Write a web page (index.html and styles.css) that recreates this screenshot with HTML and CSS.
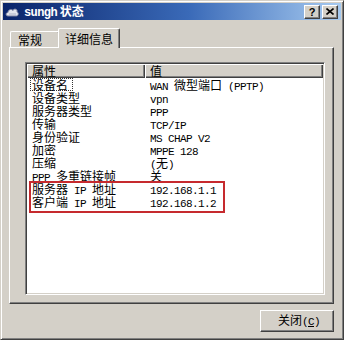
FILE: index.html
```html
<!DOCTYPE html>
<html>
<head>
<meta charset="utf-8">
<link rel="stylesheet" href="styles.css">
</head>
<body>
<div class="dlg">
  <div class="title">
    <svg class="ticon" width="14" height="11" viewBox="0 0 14 11">
      <path d="M3 10 C0.5 10 0.5 6.5 3 6.5 C3 3.5 6.5 2.5 8 4.5 C9 2 13 3 12 6 C14 6.5 13.5 10 11.5 10 Z" fill="#e4e6ee" stroke="#7a80a0" stroke-width="1"/>
      <path d="M4 8 L11 8" stroke="#b0b4c8" stroke-width="1"/>
    </svg>
    <span class="ttext"><span class="ten">sungh</span> 状态</span>
    <div class="tbtns">
      <span class="tb help">?</span>
      <span class="tb"><svg width="8" height="7" viewBox="0 0 8 7"><path d="M0.5 0.5 L7.5 6.5 M7.5 0.5 L0.5 6.5" stroke="#000" stroke-width="1.6"/></svg></span>
    </div>
  </div>
  <div class="body">
    <div class="tabs">
      <div class="tab">常规</div>
      <div class="tab sel">详细信息</div>
    </div>
    <div class="panel">
      <div class="list">
        <div class="hdr">
          <div class="hc c1">属性</div>
          <div class="hc c2">值</div>
        </div>
        <div class="rows">
          <div class="row"><span class="k"><span class="focus">设备名</span></span><span class="v"><span class="en">WAN </span>微型端口<span class="en"> (PPTP)</span></span></div>
          <div class="row"><span class="k">设备类型</span><span class="v"><span class="en">vpn</span></span></div>
          <div class="row"><span class="k">服务器类型</span><span class="v"><span class="en">PPP</span></span></div>
          <div class="row"><span class="k">传输</span><span class="v"><span class="en">TCP/IP</span></span></div>
          <div class="row"><span class="k">身份验证</span><span class="v"><span class="en">MS CHAP V2</span></span></div>
          <div class="row"><span class="k">加密</span><span class="v"><span class="en">MPPE 128</span></span></div>
          <div class="row"><span class="k">压缩</span><span class="v"><span class="en">(</span>无<span class="en">)</span></span></div>
          <div class="row"><span class="k"><span class="en">PPP </span>多重链接帧</span><span class="v">关</span></div>
          <div class="row"><span class="k">服务器<span class="en"> IP </span>地址</span><span class="v"><span class="en">192.168.1.1</span></span></div>
          <div class="row"><span class="k">客户端<span class="en"> IP </span>地址</span><span class="v"><span class="en">192.168.1.2</span></span></div>
          <div class="mark"></div>
        </div>
      </div>
    </div>
    <div class="foot">
      <button class="btn">关闭<span class="en">(<u>C</u>)</span></button>
    </div>
  </div>
</div>
</body>
</html>
```

FILE: styles.css
```css
html, body {
  margin: 0;
  padding: 0;
  background: #d4d0c8;
}
body {
  font-family: "Noto Sans CJK SC", "Liberation Sans", sans-serif;
  font-size: 12px;
  color: #000;
}
.dlg {
  width: 344px;
  height: 340px;
  box-sizing: border-box;
  background: #d4d0c8;
  border: 1px solid;
  border-color: #d4d0c8 #404040 #404040 #d4d0c8;
  box-shadow: inset 1px 1px 0 #fff, inset -1px -1px 0 #808080;
  padding: 2px;
  display: flex;
  flex-direction: column;
}
.title {
  height: 17px;
  background: linear-gradient(to right, #0a246a 0%, #3a6ab8 55%, #a6caf0 100%);
  display: flex;
  align-items: center;
  padding: 0 3px 0 2px;
  color: #fff;
  font-weight: bold;
}
.ticon {
  display: block;
  margin-right: 5px;
}
.ttext {
  flex: 1;
  line-height: 17px;
  white-space: nowrap;
}
.ten {
  font-family: "Liberation Mono", monospace;
  font-size: 12px;
  letter-spacing: -0.6px;
}
.tbtns {
  display: flex;
  gap: 2px;
}
.tb {
  width: 16px;
  height: 14px;
  box-sizing: border-box;
  background: #d4d0c8;
  border: 1px solid;
  border-color: #fff #404040 #404040 #fff;
  box-shadow: inset -1px -1px 0 #808080;
  display: flex;
  align-items: center;
  justify-content: center;
  color: #000;
  font-family: "Liberation Sans", sans-serif;
  font-weight: bold;
  font-size: 11px;
  line-height: 12px;
}
.body {
  flex: 1;
  display: flex;
  flex-direction: column;
  padding: 0 7px 0 6px;
}
.tabs {
  margin-top: 8px;
  height: 19px;
  display: flex;
  align-items: flex-end;
  padding-left: 1px;
}
.tab {
  box-sizing: border-box;
  background: #d4d0c8;
  border-top: 1px solid #fff;
  border-left: 1px solid #fff;
  border-right: 1px solid #404040;
  box-shadow: inset -1px 0 0 #808080;
  border-radius: 2px 2px 0 0;
  line-height: 14px;
  white-space: nowrap;
}
.tab:first-child {
  width: 50px;
  height: 16px;
  margin-right: -2px;
  padding: 1px 0 0 7px;
}
.tab.sel {
  width: 62px;
  height: 20px;
  margin-bottom: -1px;
  padding: 3px 0 0 6px;
  position: relative;
  z-index: 1;
}
.panel {
  height: 257px;
  box-sizing: border-box;
  border: 1px solid;
  border-color: #fff #404040 #404040 #fff;
  box-shadow: inset -1px -1px 0 #808080;
  padding: 14px 8px 0 15px;
}
.list {
  height: 233px;
  box-sizing: border-box;
  background: #fff;
  border: 1px solid;
  border-color: #808080 #fff #fff #808080;
  box-shadow: inset 1px 1px 0 #404040, inset -1px -1px 0 #d4d0c8;
  padding: 1px 1px 0 1px;
  display: flex;
  flex-direction: column;
}
.hdr {
  display: flex;
  height: 14px;
}
.hc {
  box-sizing: border-box;
  height: 14px;
  background: #d4d0c8;
  box-shadow: inset 1px 1px 0 #fff, inset -1px -1px 0 #404040, inset -2px -2px 0 #808080;
  line-height: 14px;
  padding-left: 5px;
}
.c1 { width: 118px; }
.c2 { flex: 1; }
.rows {
  position: relative;
  flex: 1;
}
.row {
  display: flex;
  height: 13px;
  line-height: 13px;
  white-space: nowrap;
}
.k {
  width: 118px;
  box-sizing: border-box;
  padding-left: 5px;
}
.v {
  padding-left: 5px;
}
.focus {
  display: inline-block;
  box-sizing: border-box;
  height: 13px;
  line-height: 11px;
  border: 1px dotted #333;
  margin-left: -2px;
  padding: 0 4px 0 1px;
}
.en {
  font-family: "Liberation Mono", monospace;
  font-size: 11px;
  letter-spacing: -0.6px;
}
.mark {
  position: absolute;
  left: 2px;
  top: 103px;
  width: 196px;
  height: 32px;
  box-sizing: border-box;
  border: 2px solid #c62a2e;
}
.foot {
  display: flex;
  justify-content: flex-end;
  margin-top: 6px;
}
.btn {
  width: 74px;
  height: 22px;
  box-sizing: border-box;
  background: #d4d0c8;
  border: 1px solid;
  border-color: #fff #404040 #404040 #fff;
  box-shadow: inset -1px -1px 0 #808080;
  font-family: "Noto Sans CJK SC", sans-serif;
  font-size: 12px;
  line-height: 18px;
  color: #000;
  padding: 0 0 0 4px;
  margin: 0;
}
```
